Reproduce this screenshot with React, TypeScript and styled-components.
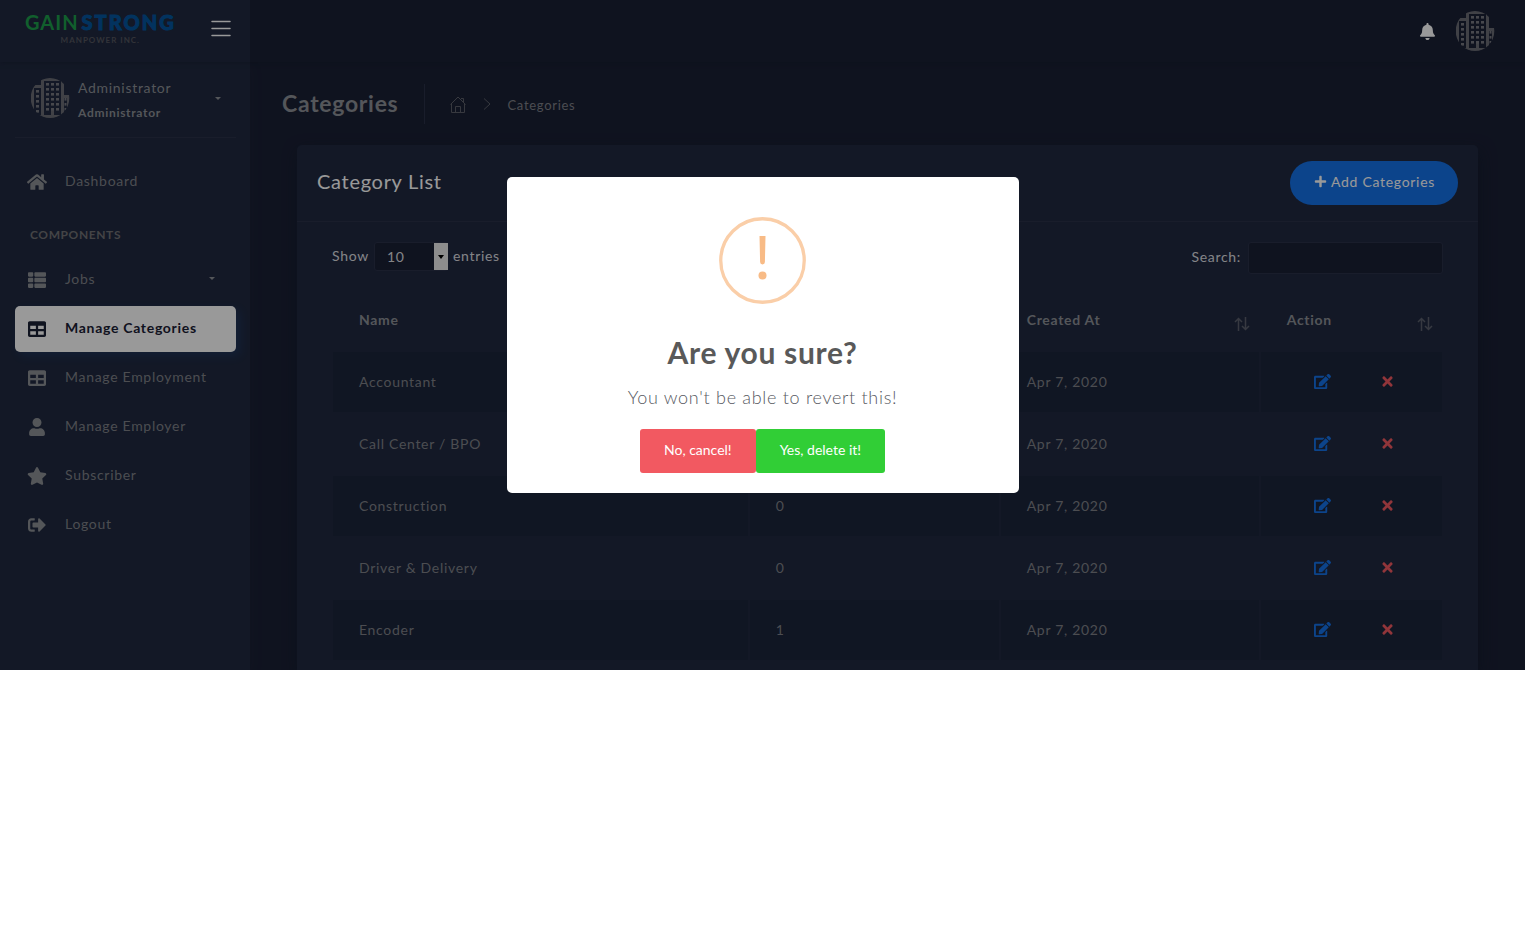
import React from "react";
import styled, { createGlobalStyle, css } from "styled-components";
import {
  FaBell,
  FaEdit,
  FaHome,
  FaPlus,
  FaSignOutAlt,
  FaStar,
  FaTable,
  FaThList,
  FaTimes,
  FaUser,
} from "react-icons/fa";

const c = {
  body: "#1a2035",
  panel: "#202940",
  stripe: "#1c253b",
  line: "#2a3149",
  blue: "#1572e8",
  red: "#f25961",
  text: "#8d9096",
  muted: "#7f8188",
};

const GlobalStyle = createGlobalStyle`
  *, *::before, *::after { box-sizing: border-box; }
  body {
    margin: 0;
    background: #fff;
    font-family: Lato, "Open Sans", sans-serif;
    font-size: 14px;
    line-height: 21px;
    letter-spacing: 0.05em;
  }
  a { color: inherit; text-decoration: none; }
  h1, h2, h4, p, ul { margin: 0; padding: 0; }
  ul { list-style: none; }
  button, input, select { font: inherit; letter-spacing: inherit; }
`;

const Stage = styled.div`
  position: relative;
  display: flex;
  flex-direction: column;
  background: ${c.body};
`;

const Header = styled.header`
  display: flex;
  height: 62px;
  background: ${c.body};
  box-shadow: 0 0 5px rgba(18, 23, 39, 0.5);
  z-index: 1;
`;

const Brand = styled.div`
  flex: 0 0 250px;
  display: flex;
  justify-content: space-between;
  align-items: flex-start;
  padding: 11px 19px 0 25px;
  background: ${c.panel};
`;

const Logo = styled.a`
  display: flex;
  flex-direction: column;
  align-items: center;
`;

const LogoName = styled.span`
  display: flex;
  gap: 3px;
  font-size: 20px;
  line-height: 22px;
  font-weight: 700;
  letter-spacing: 1px;
  color: #1d9f4b;
`;

const LogoStrong = styled.span`
  font-weight: 900;
  letter-spacing: 2px;
  -webkit-text-stroke: 1px #04569f;
  color: #04569f;
`;

const LogoSub = styled.span`
  font-size: 8px;
  line-height: 14px;
  font-weight: 700;
  letter-spacing: 1px;
  color: #55565f;
`;

const IconButton = styled.button`
  display: flex;
  padding: 0;
  border: 0;
  background: none;
  color: #fff;
  cursor: pointer;
`;

const MenuButton = styled(IconButton)`
  padding: 9px 0;
`;

const TopActions = styled.div`
  flex: 1;
  display: flex;
  justify-content: flex-end;
  align-items: center;
  gap: 19px;
  padding-right: 30px;
`;

const Columns = styled.div`
  display: flex;
`;

const Sidebar = styled.aside`
  flex: 0 0 250px;
  padding: 16px 14px 0 15px;
  background: ${c.panel};
  box-shadow: 4px 4px 10px rgba(69, 65, 78, 0.06);
`;

const Profile = styled.a`
  display: flex;
  align-items: flex-start;
  height: 60px;
  padding: 0 0 19px 15px;
  border-bottom: 1px solid ${c.line};
`;

const ProfileText = styled.span`
  flex: 1;
  display: flex;
  flex-direction: column;
  padding-left: 8px;
  color: ${c.text};
`;

const ProfileName = styled.span`
  line-height: 20px;
`;

const ProfileRole = styled.span`
  font-size: 12px;
  line-height: 30px;
  font-weight: 700;
`;

const Caret = styled.span<{ $right: number }>`
  align-self: center;
  margin-right: ${(p) => p.$right}px;
  border: 3px solid transparent;
  border-top-color: ${c.text};
  border-bottom: 0;
`;

const Nav = styled.ul`
  display: flex;
  flex-direction: column;
  gap: 3px;
  padding-top: 21px;
`;

const NavSection = styled.li`
  padding: 16px 15px 9px;
  font-size: 12px;
  font-weight: 700;
  line-height: 21px;
  letter-spacing: 0.05em;
  color: #727275;
`;

const NavLink = styled.a<{ $active?: boolean }>`
  display: flex;
  align-items: center;
  height: 46px;
  padding: 0 0 3px 12px;
  border-radius: 5px;
  color: ${c.muted};
  svg {
    flex: none;
    width: 20px;
    margin: 2px 18px 0 0;
    color: #8d9094;
  }
  ${(p) =>
    p.$active &&
    css`
      background: #fff;
      color: ${c.body};
      font-weight: 700;
      box-shadow: 4px 4px 10px rgba(21, 114, 232, 0.15);
      svg {
        color: ${c.body};
      }
    `}
`;

const NavLabel = styled.span`
  flex: 1;
`;

const Main = styled.main`
  flex: 1;
  min-width: 0;
  padding: 22px 47px 0;
`;

const PageHeader = styled.div`
  display: flex;
  align-items: center;
  height: 40px;
  margin: 0 0 21px -15px;
`;

const PageTitle = styled.h4`
  align-self: stretch;
  padding-right: 26px;
  border-right: 1px solid ${c.line};
  font-size: 23px;
  line-height: 38px;
  font-weight: 700;
  color: ${c.text};
`;

const Crumbs = styled.nav`
  display: flex;
  align-items: center;
  gap: 12px;
  padding: 2px 0 0 25px;
  font-size: 13px;
  color: ${c.muted};
  svg {
    display: block;
    margin-bottom: 2px;
    color: #5c5f69;
  }
`;

const Card = styled.section`
  border-radius: 5px 5px 0 0;
  background: ${c.panel};
  box-shadow: 2px 6px 15px rgba(18, 23, 39, 0.5);
`;

const CardHeader = styled.div`
  display: flex;
  justify-content: space-between;
  align-items: center;
  padding: 16px 20px;
  border-bottom: 1px solid ${c.line};
`;

const CardTitle = styled.h2`
  font-size: 20px;
  line-height: 32px;
  font-weight: 400;
  padding-bottom: 4px;
  color: #fff;
`;

const AddButton = styled.button`
  display: flex;
  align-items: center;
  gap: 4px;
  height: 44px;
  padding: 0 23px 3px 24px;
  border: 0;
  border-radius: 22px;
  background: ${c.blue};
  color: #fff;
  cursor: pointer;
`;

const CardBody = styled.div`
  padding: 20px 35px 9px;
  color: #dcdde0;
`;

const Tools = styled.div`
  display: flex;
  justify-content: space-between;
  align-items: flex-start;
  margin-bottom: 15px;
`;

const Length = styled.label`
  display: flex;
  align-items: flex-start;
  gap: 5px;
  line-height: 28px;
`;

const SelectBox = styled.span`
  position: relative;
  display: flex;
`;

const Select = styled.select`
  appearance: none;
  width: 74px;
  height: 29px;
  padding: 0 12px 3px;
  border: 1px solid ${c.line};
  border-radius: 3px;
  background: ${c.body};
  color: #dcdde0;
`;

const SelectArrow = styled.span`
  position: absolute;
  inset: 1px 0 1px auto;
  width: 14px;
  display: flex;
  align-items: center;
  justify-content: center;
  background: #ececec;
  pointer-events: none;
  &::after {
    content: "";
    border: 3px solid transparent;
    border-top: 4px solid #000;
    border-bottom: 0;
  }
`;

const Search = styled.label`
  display: flex;
  align-items: flex-start;
  gap: 7px;
  line-height: 29px;
`;

const SearchInput = styled.input`
  width: 195px;
  height: 32px;
  padding: 0 10px;
  border: 1px solid ${c.line};
  border-radius: 3px;
  background: ${c.body};
  color: #fff;
`;

const Table = styled.table`
  width: 100%;
  table-layout: fixed;
  border-collapse: separate;
  border-spacing: 0;
  color: ${c.muted};
`;

const Th = styled.th<{ $share: number }>`
  width: ${(p) => p.$share}%;
  height: 62px;
  padding: 0 10px 0 27px;
  text-align: left;
  font-weight: 700;
  color: ${c.text};
`;

const ThInner = styled.span`
  display: flex;
  justify-content: space-between;
  svg {
    margin-top: 8px;
    color: #5c606d;
  }
`;

const Tr = styled.tr`
  &:nth-child(odd) {
    background: ${c.stripe};
  }
`;

const Td = styled.td`
  height: 62px;
  padding: 0 26px 2px;
  border: 1px solid ${c.panel};
`;

const RowActions = styled.span`
  display: flex;
  align-items: center;
  gap: 49px;
  padding-left: 27px;
`;

const RowButton = styled(IconButton)<{ $danger?: boolean }>`
  color: ${(p) => (p.$danger ? c.red : c.blue)};
`;

const Overlay = styled.div`
  position: absolute;
  inset: 0;
  z-index: 2;
  display: flex;
  align-items: center;
  justify-content: center;
  background: rgba(0, 0, 0, 0.4);
`;

const Modal = styled.div`
  display: flex;
  flex-direction: column;
  align-items: center;
  width: 512px;
  max-width: 90%;
  padding: 40px 20px 20px;
  border-radius: 5px;
  background: #fff;
`;

const ModalTitle = styled.h1`
  margin-top: 26px;
  font-size: 30px;
  line-height: 42px;
  font-weight: 700;
  color: #595959;
`;

const ModalText = styled.p`
  margin-top: 12px;
  font-size: 18px;
  line-height: 24px;
  font-weight: 300;
  color: #575962;
`;

const ModalFooter = styled.div`
  display: flex;
  margin-top: 20px;
`;

const ModalButton = styled.button<{ $color: string }>`
  height: 44px;
  padding: 0 24px 3px;
  border: 0;
  border-radius: 3px;
  background: ${(p) => p.$color};
  color: #fff;
  letter-spacing: 0;
  cursor: pointer;
`;

const windowRows = [5, 10, 15, 20, 25, 30];

const Building = () => (
  <svg width="40" height="40" viewBox="0 0 40 40" aria-hidden="true">
    <defs>
      <clipPath id="round">
        <ellipse cx="20" cy="20" rx="19.300" ry="20" />
      </clipPath>
    </defs>
    <g clipPath="url(#round)" fill="none" stroke="#6b6d75" strokeWidth="3">
      <path d="M12.500 40V1.500H32.500V40M11 8.500H2.500V40M33 18.500H38.500V40M8 38.500H36M22.500 30V39" />
      <g fill="#777981" stroke="none">
        {windowRows.map((y) => (
          <React.Fragment key={y}>
            <rect x="16" y={y} width="3" height="2.600" />
            <rect x="21" y={y} width="3" height="2.600" />
            <rect x="26" y={y} width="3" height="2.600" />
            {y > 5 && <rect x="6" y={y + 2} width="3" height="2.600" />}
            {y > 15 && <rect x="34.500" y={y} width="2" height="2.600" />}
          </React.Fragment>
        ))}
      </g>
    </g>
  </svg>
);

const MenuIcon = () => (
  <svg width="20" height="17" viewBox="0 0 20 17" stroke="currentColor" strokeWidth="1.500" strokeLinecap="round">
    <path d="M1 1.500H19M1 8.500H19M1 15.500H19" />
  </svg>
);

const HomeLineIcon = () => (
  <svg width="16" height="17" viewBox="0 0 16 17" fill="none" stroke="currentColor">
    <path d="M.5 8.500L8 1l7.500 7.500M1.500 8v8.500h13V8M5.500 16.500v-6h5v6M11 2.500h2.500v4" />
  </svg>
);

const ChevronIcon = () => (
  <svg width="17" height="12" viewBox="0 0 17 12" fill="none" stroke="currentColor">
    <path d="M6 .5L12 6l-6 5.500" />
  </svg>
);

const SortIcon = () => (
  <svg width="16" height="14" viewBox="0 0 16 14" fill="none" stroke="currentColor" strokeWidth="1.500">
    <path d="M4.500 14V1.500M1 5l3.500-3.500L8 5M11.500 0v12.500M8 9l3.500 3.500L15 9" />
  </svg>
);

const navItems = [
  { label: "Manage Categories", icon: <FaTable size={18} />, active: true },
  { label: "Manage Employment", icon: <FaTable size={18} /> },
  { label: "Manage Employer", icon: <FaUser size={18} /> },
  { label: "Subscriber", icon: <FaStar size={18} /> },
  { label: "Logout", icon: <FaSignOutAlt size={18} /> },
];

const columns = [
  { label: "Name", share: 37.5 },
  { label: "Jobs", share: 22.6 },
  { label: "Created At", share: 23.4 },
  { label: "Action", share: 16.5 },
];

const categories: { name: string; jobs?: number }[] = [
  { name: "Accountant" },
  { name: "Call Center / BPO" },
  { name: "Construction", jobs: 0 },
  { name: "Driver & Delivery", jobs: 0 },
  { name: "Encoder", jobs: 1 },
];

export default function App() {
  return (
    <>
      <GlobalStyle />
      <Stage>
        <Header>
          <Brand>
            <Logo href="#">
              <LogoName>
                GAIN<LogoStrong>STRONG</LogoStrong>
              </LogoName>
              <LogoSub>MANPOWER INC.</LogoSub>
            </Logo>
            <MenuButton aria-label="Toggle sidebar">
              <MenuIcon />
            </MenuButton>
          </Brand>
          <TopActions>
            <IconButton aria-label="Notifications">
              <FaBell size={17} />
            </IconButton>
            <IconButton aria-label="Account">
              <Building />
            </IconButton>
          </TopActions>
        </Header>
        <Columns>
          <Sidebar>
            <Profile href="#">
              <Building />
              <ProfileText>
                <ProfileName>Administrator</ProfileName>
                <ProfileRole>Administrator</ProfileRole>
              </ProfileText>
              <Caret $right={15} />
            </Profile>
            <Nav>
              <li>
                <NavLink href="#">
                  <FaHome size={20} />
                  <NavLabel>Dashboard</NavLabel>
                </NavLink>
              </li>
              <NavSection>COMPONENTS</NavSection>
              <li>
                <NavLink href="#">
                  <FaThList size={18} />
                  <NavLabel>Jobs</NavLabel>
                  <Caret $right={21} />
                </NavLink>
              </li>
              {navItems.map((item) => (
                <li key={item.label}>
                  <NavLink href="#" $active={item.active}>
                    {item.icon}
                    <NavLabel>{item.label}</NavLabel>
                  </NavLink>
                </li>
              ))}
            </Nav>
          </Sidebar>
          <Main>
            <PageHeader>
              <PageTitle>Categories</PageTitle>
              <Crumbs aria-label="Breadcrumb">
                <a href="#" aria-label="Home">
                  <HomeLineIcon />
                </a>
                <ChevronIcon />
                <a href="#">Categories</a>
              </Crumbs>
            </PageHeader>
            <Card>
              <CardHeader>
                <CardTitle>Category List</CardTitle>
                <AddButton>
                  <FaPlus size={13} />
                  Add Categories
                </AddButton>
              </CardHeader>
              <CardBody>
                <Tools>
                  <Length>
                    Show
                    <SelectBox>
                      <Select defaultValue="10">
                        <option>10</option>
                        <option>25</option>
                        <option>50</option>
                      </Select>
                      <SelectArrow />
                    </SelectBox>
                    entries
                  </Length>
                  <Search>
                    Search:
                    <SearchInput type="search" />
                  </Search>
                </Tools>
                <Table>
                  <thead>
                    <tr>
                      {columns.map((col) => (
                        <Th key={col.label} $share={col.share}>
                          <ThInner>
                            {col.label}
                            <SortIcon />
                          </ThInner>
                        </Th>
                      ))}
                    </tr>
                  </thead>
                  <tbody>
                    {categories.map((row) => (
                      <Tr key={row.name}>
                        <Td>{row.name}</Td>
                        <Td>{row.jobs}</Td>
                        <Td>Apr 7, 2020</Td>
                        <Td>
                          <RowActions>
                            <RowButton aria-label={`Edit ${row.name}`}>
                              <FaEdit size={17} />
                            </RowButton>
                            <RowButton $danger aria-label={`Delete ${row.name}`}>
                              <FaTimes size={15} />
                            </RowButton>
                          </RowActions>
                        </Td>
                      </Tr>
                    ))}
                  </tbody>
                </Table>
              </CardBody>
            </Card>
          </Main>
        </Columns>
        <Overlay>
          <Modal role="dialog" aria-modal="true" aria-labelledby="confirm-title">
            <svg width="88" height="88" viewBox="0 0 88 88" aria-hidden="true">
              <circle cx="43.500" cy="43.500" r="41.750" fill="none" stroke="#facea8" strokeWidth="3.300" />
              <path d="M40.500 19h6l-.6 26a2.400 2.400 0 0 1-4.800 0z" fill="#f8bb86" />
              <circle cx="43.500" cy="58.500" r="4" fill="#f8bb86" />
            </svg>
            <ModalTitle id="confirm-title">Are you sure?</ModalTitle>
            <ModalText>You won't be able to revert this!</ModalText>
            <ModalFooter>
              <ModalButton $color="#f25961">No, cancel!</ModalButton>
              <ModalButton $color="#31ce36">Yes, delete it!</ModalButton>
            </ModalFooter>
          </Modal>
        </Overlay>
      </Stage>
    </>
  );
}
